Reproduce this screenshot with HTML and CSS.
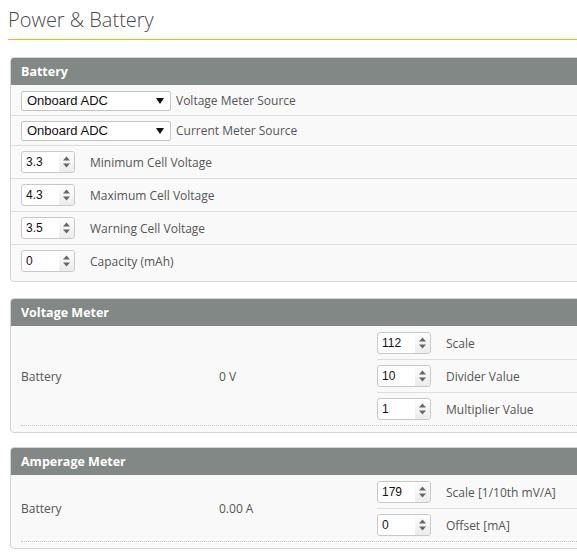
FILE: index.html
```html
<!DOCTYPE html>
<html lang="en">
<head>
<meta charset="UTF-8">
<title>Power &amp; Battery</title>
<link rel="stylesheet" href="styles.css">
</head>
<body>

<div class="page">
    <div class="title">Power &amp; Battery</div>

    <div class="box">
        <div class="box-head">Battery</div>
        <div class="box-body">
            <div class="row sel-row">
                <span class="select">Onboard ADC<svg class="arrow" width="8" height="6" viewBox="0 0 8 6"><path d="M0 0H8L4 6Z"/></svg></span>
                <span class="lbl sel-lbl">Voltage Meter Source</span>
            </div>
            <div class="row sel-row">
                <span class="select">Onboard ADC<svg class="arrow" width="8" height="6" viewBox="0 0 8 6"><path d="M0 0H8L4 6Z"/></svg></span>
                <span class="lbl sel-lbl">Current Meter Source</span>
            </div>
            <div class="row">
                <span class="spin"><span class="val">3.3</span><span class="btns"><svg width="9" height="14" viewBox="0 0 9 14"><path d="M1 5.5L4.5 1.5L8 5.5Z"/><path d="M1 8.5L4.5 12.5L8 8.5Z"/></svg></span></span>
                <span class="lbl">Minimum Cell Voltage</span>
            </div>
            <div class="row">
                <span class="spin"><span class="val">4.3</span><span class="btns"><svg width="9" height="14" viewBox="0 0 9 14"><path d="M1 5.5L4.5 1.5L8 5.5Z"/><path d="M1 8.5L4.5 12.5L8 8.5Z"/></svg></span></span>
                <span class="lbl">Maximum Cell Voltage</span>
            </div>
            <div class="row">
                <span class="spin"><span class="val">3.5</span><span class="btns"><svg width="9" height="14" viewBox="0 0 9 14"><path d="M1 5.5L4.5 1.5L8 5.5Z"/><path d="M1 8.5L4.5 12.5L8 8.5Z"/></svg></span></span>
                <span class="lbl">Warning Cell Voltage</span>
            </div>
            <div class="row last">
                <span class="spin"><span class="val">0</span><span class="btns"><svg width="9" height="14" viewBox="0 0 9 14"><path d="M1 5.5L4.5 1.5L8 5.5Z"/><path d="M1 8.5L4.5 12.5L8 8.5Z"/></svg></span></span>
                <span class="lbl">Capacity (mAh)</span>
            </div>
        </div>
    </div>

    <div class="box">
        <div class="box-head">Voltage Meter</div>
        <div class="box-body">
            <div class="meter">
                <div class="cell">Battery</div>
                <div class="cell">0 V</div>
                <div class="opts">
                    <div class="opt">
                        <span class="spin"><span class="val">112</span><span class="btns"><svg width="9" height="14" viewBox="0 0 9 14"><path d="M1 5.5L4.5 1.5L8 5.5Z"/><path d="M1 8.5L4.5 12.5L8 8.5Z"/></svg></span></span>
                        <span class="lbl">Scale</span>
                    </div>
                    <div class="opt">
                        <span class="spin"><span class="val">10</span><span class="btns"><svg width="9" height="14" viewBox="0 0 9 14"><path d="M1 5.5L4.5 1.5L8 5.5Z"/><path d="M1 8.5L4.5 12.5L8 8.5Z"/></svg></span></span>
                        <span class="lbl">Divider Value</span>
                    </div>
                    <div class="opt">
                        <span class="spin"><span class="val">1</span><span class="btns"><svg width="9" height="14" viewBox="0 0 9 14"><path d="M1 5.5L4.5 1.5L8 5.5Z"/><path d="M1 8.5L4.5 12.5L8 8.5Z"/></svg></span></span>
                        <span class="lbl">Multiplier Value</span>
                    </div>
                </div>
            </div>
        </div>
    </div>

    <div class="box last-box">
        <div class="box-head">Amperage Meter</div>
        <div class="box-body">
            <div class="meter">
                <div class="cell">Battery</div>
                <div class="cell">0.00 A</div>
                <div class="opts">
                    <div class="opt">
                        <span class="spin"><span class="val">179</span><span class="btns"><svg width="9" height="14" viewBox="0 0 9 14"><path d="M1 5.5L4.5 1.5L8 5.5Z"/><path d="M1 8.5L4.5 12.5L8 8.5Z"/></svg></span></span>
                        <span class="lbl">Scale [1/10th mV/A]</span>
                    </div>
                    <div class="opt">
                        <span class="spin"><span class="val">0</span><span class="btns"><svg width="9" height="14" viewBox="0 0 9 14"><path d="M1 5.5L4.5 1.5L8 5.5Z"/><path d="M1 8.5L4.5 12.5L8 8.5Z"/></svg></span></span>
                        <span class="lbl">Offset [mA]</span>
                    </div>
                </div>
            </div>
        </div>
    </div>
</div>

</body>
</html>
```

FILE: styles.css
```css
body {
    margin: 0;
    padding: 0;
    overflow: hidden;
    background-color: #fff;
    font-family: "Open Sans", "Liberation Sans", sans-serif;
    font-size: 12px;
    color: #555;
}
.page {
    width: 577px;
    overflow: hidden;
}
.title {
    margin: 6px 0 0 8px;
    padding-bottom: 6px;
    line-height: 27px;
    font-size: 20px;
    font-weight: 300;
    color: #4a4a4a;
    border-bottom: 1px solid #ffbb00;
}
.box {
    width: 620px;
    margin: 17px 0 0 10px;
    border: 1px solid #d4d4d4;
    border-radius: 4px;
    overflow: hidden;
    background-color: #f9f9f9;
}
.box + .box {
    margin-top: 16px;
}
.box + .last-box {
    margin-top: 14px;
}
.box-head {
    height: 27px;
    line-height: 27px;
    padding-left: 10px;
    background-color: #828885;
    color: #fff;
    font-size: 12.5px;
    font-weight: bold;
}
.box-body {
    padding: 1px 0 4px;
}
.row {
    display: flex;
    align-items: center;
    height: 32px;
    padding-left: 10px;
    border-bottom: 1px solid #ddd;
}
.row.sel-row {
    height: 29px;
}
.row.last {
    border-bottom: none;
}
.select {
    display: flex;
    align-items: center;
    box-sizing: border-box;
    width: 150px;
    height: 20px;
    padding-left: 5px;
    background-color: #fff;
    border: 1px solid #c4c4c4;
    border-radius: 2px;
    font-family: "Liberation Sans", Arial, sans-serif;
    font-size: 13px;
    color: #111;
}
.select .arrow {
    margin-left: auto;
    margin-right: 6px;
    fill: #111;
}
.lbl {
    margin-left: 15px;
    white-space: nowrap;
}
.sel-lbl {
    margin-left: 5px;
}
.spin {
    display: flex;
    align-items: center;
    box-sizing: border-box;
    width: 54px;
    height: 22px;
    background-color: #fff;
    border: 1px solid #c8c8c8;
    border-radius: 3px;
    overflow: hidden;
}
.spin .val {
    flex: 1;
    padding-left: 4px;
    font-family: "Liberation Sans", Arial, sans-serif;
    font-size: 12px;
    color: #111;
}
.spin .btns {
    display: flex;
    align-items: center;
    justify-content: center;
    width: 15px;
    height: 100%;
    background: linear-gradient(#fdfdfd, #ececec);
}
.spin .btns svg {
    fill: #666;
}
.meter {
    display: grid;
    grid-template-columns: 198px 158px 1fr;
    align-items: center;
    margin: 0 0 2px 10px;
    border-bottom: 1px dotted #c4c4c4;
}
.opt {
    display: flex;
    align-items: center;
    height: 32px;
    border-bottom: 1px solid #ddd;
}
.opt:last-child {
    border-bottom: none;
}
```
